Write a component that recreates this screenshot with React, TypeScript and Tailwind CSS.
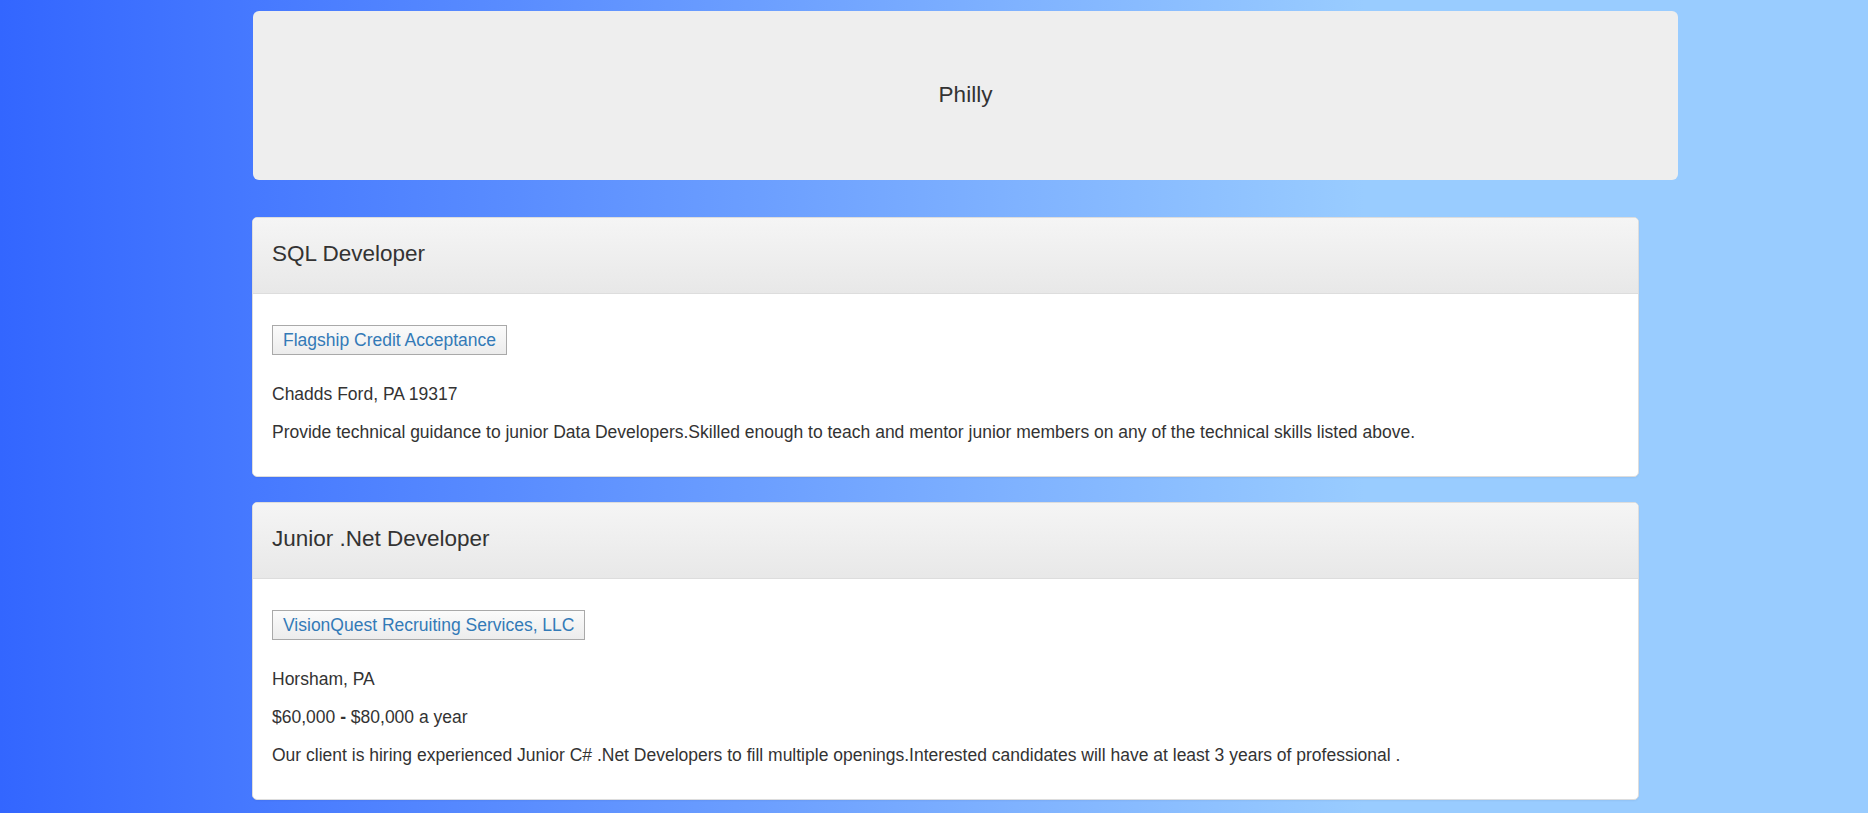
import React from "react"

type Job = {
  title: string
  company: string
  location: string
  salary?: [string, string, string]
  summary: string
}

const jobs: Job[] = [
  {
    title: "SQL Developer",
    company: "Flagship Credit Acceptance",
    location: "Chadds Ford, PA 19317",
    summary:
      "Provide technical guidance to junior Data Developers.Skilled enough to teach and mentor junior members on any of the technical skills listed above.",
  },
  {
    title: "Junior .Net Developer",
    company: "VisionQuest Recruiting Services, LLC",
    location: "Horsham, PA",
    salary: ["$60,000 ", "-", " $80,000 a year"],
    summary:
      "Our client is hiring experienced Junior C# .Net Developers to fill multiple openings.Interested candidates will have at least 3 years of professional .",
  },
]

function JobPanel({ job }: { job: Job }) {
  return (
    <div className="w-[1387px] overflow-hidden rounded-[5px] border border-[#dddddd] bg-white shadow-[0_1px_2px_rgba(0,0,0,0.05)]">
      {/* Heading */}
      <div className="border-b border-[#dddddd] bg-[linear-gradient(to_bottom,#f5f5f5,#e8e8e8)] px-[19px] pb-[25px] pt-[22px]">
        <h3 className="text-[22.5px] leading-[28px] text-[#333333]">{job.title}</h3>
      </div>

      {/* Body */}
      <div className="px-[19px] pb-[31px] pt-[31px] text-[17.5px] leading-[25px] text-[#333333]">
        <button className="mb-[27px] block border border-[#a9a9a9] bg-[linear-gradient(to_bottom,#fbfbfb,#ececec)] px-[10px] py-[2px] text-[17.5px] leading-[24px] text-[#337ab7]">
          {job.company}
        </button>
        <div className="flex flex-col gap-[13px]">
          <p>{job.location}</p>
          {job.salary && (
            <p>
              {job.salary[0]}
              <b>{job.salary[1]}</b>
              {job.salary[2]}
            </p>
          )}
          <p>{job.summary}</p>
        </div>
      </div>
    </div>
  )
}

export default function App() {
  return (
    <div
      className="min-h-screen w-full bg-[linear-gradient(to_right,#3366ff_0%,#99ccff_73%,#99ccff_100%)] pb-[13px] pt-[11px]"
      style={{ fontFamily: '"Liberation Sans", Arial, sans-serif' }}
    >
      <div className="ml-[252px] flex flex-col">
        {/* Jumbotron */}
        <div className="ml-[1px] flex h-[169px] w-[1425px] items-center justify-center rounded-[6px] bg-[#eeeeee]">
          <span className="pb-[2px] text-[22.5px] leading-[28px] text-[#333333]">Philly</span>
        </div>

        <div className="mt-[37px] flex flex-col gap-[25px]">
          {jobs.map((job) => (
            <JobPanel key={job.title} job={job} />
          ))}
        </div>
      </div>
    </div>
  )
}
